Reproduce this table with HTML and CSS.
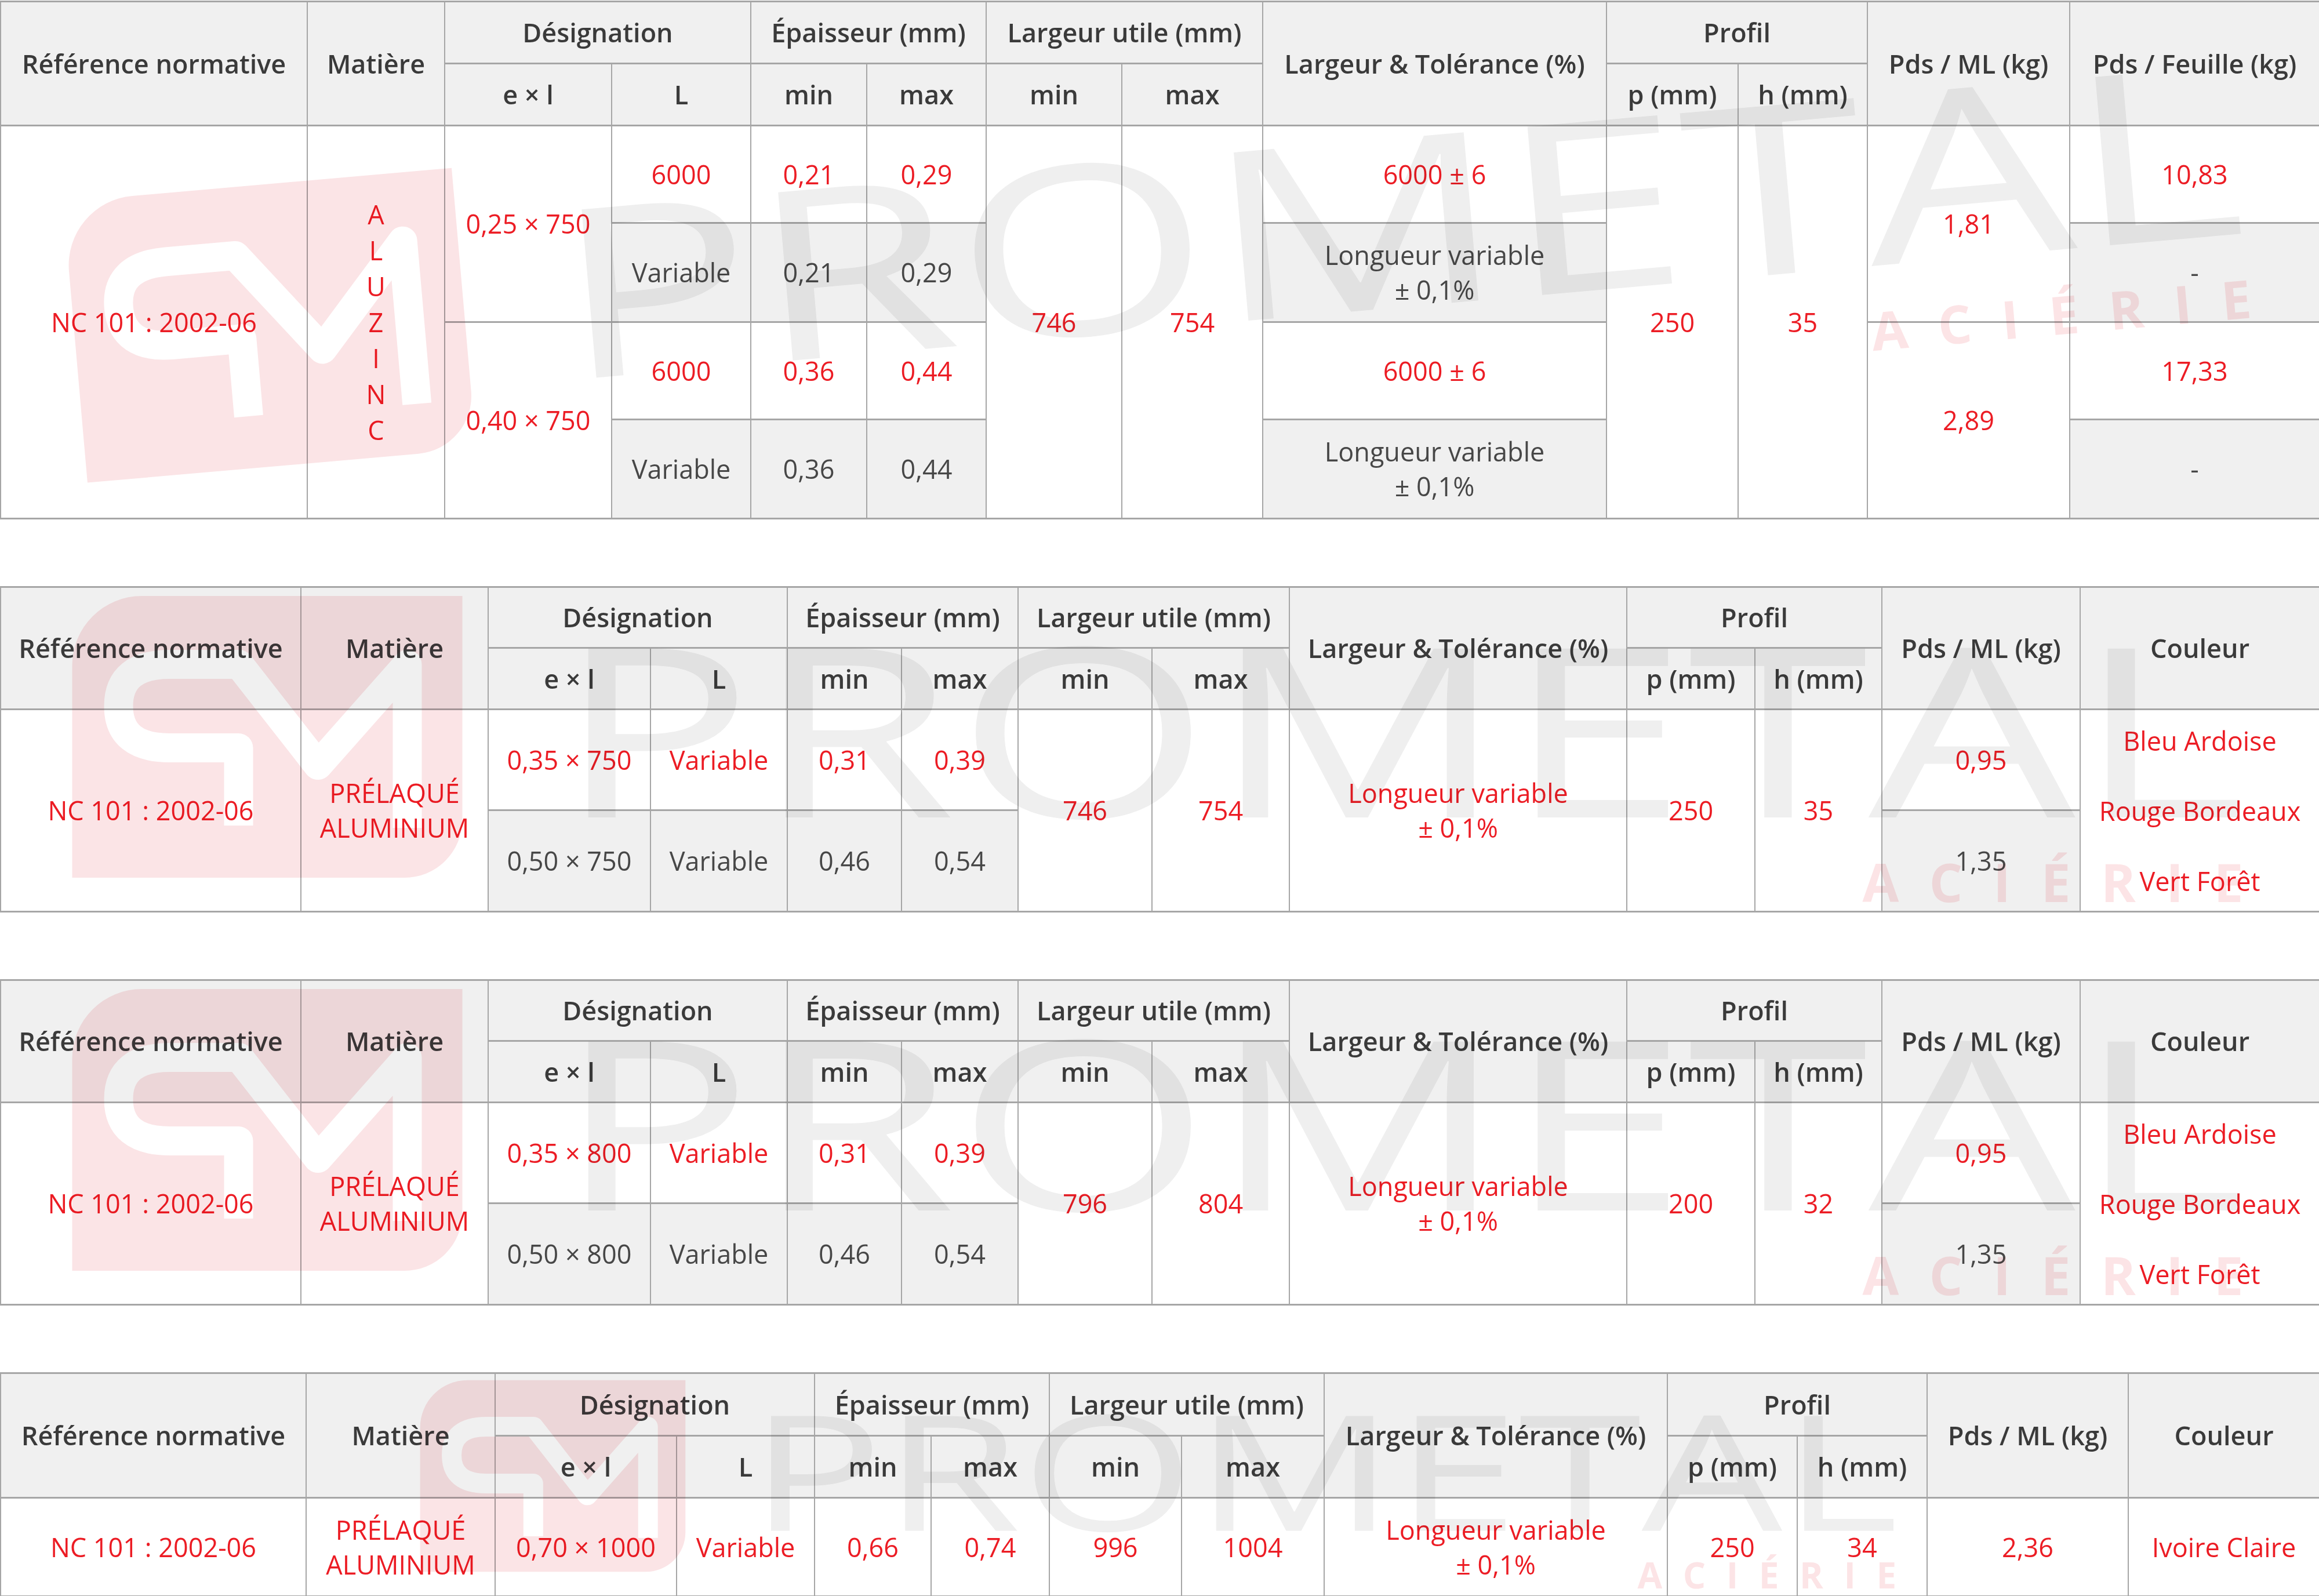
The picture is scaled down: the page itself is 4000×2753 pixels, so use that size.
FILE: index.html
```html
<!DOCTYPE html>
<html lang="fr">
<head>
<meta charset="utf-8">
<title>Tableaux</title>
<link rel="stylesheet" href="styles.css">
</head>
<body>
<div class="page">

<div class="block b1">
<table class="t t1">
<colgroup><col class="a1"><col class="a2"><col class="a3"><col class="a4"><col class="a5"><col class="a6"><col class="a7"><col class="a8"><col class="a9"><col class="a10"><col class="a11"><col class="a12"><col class="a13"></colgroup>
<thead>
<tr class="h1"><th rowspan="2">Référence normative</th><th rowspan="2">Matière</th><th colspan="2">Désignation</th><th colspan="2">Épaisseur (mm)</th><th colspan="2">Largeur utile (mm)</th><th rowspan="2">Largeur &amp; Tolérance (%)</th><th colspan="2">Profil</th><th rowspan="2">Pds / ML (kg)</th><th rowspan="2">Pds / Feuille (kg)</th></tr>
<tr class="h2"><th>e × l</th><th>L</th><th>min</th><th>max</th><th>min</th><th>max</th><th>p (mm)</th><th>h (mm)</th></tr>
</thead>
<tbody>
<tr class="r1a"><td rowspan="4">NC 101 : 2002-06</td><td rowspan="4" class="vert">A<br>L<br>U<br>Z<br>I<br>N<br>C</td><td rowspan="2">0,25 × 750</td><td>6000</td><td>0,21</td><td>0,29</td><td rowspan="4">746</td><td rowspan="4">754</td><td>6000 ± 6</td><td rowspan="4">250</td><td rowspan="4">35</td><td rowspan="2">1,81</td><td>10,83</td></tr>
<tr class="r1b"><td class="gr">Variable</td><td class="gr">0,21</td><td class="gr">0,29</td><td class="gr">Longueur variable<br>± 0,1%</td><td class="gr">-</td></tr>
<tr class="r1a"><td rowspan="2">0,40 × 750</td><td>6000</td><td>0,36</td><td>0,44</td><td>6000 ± 6</td><td rowspan="2">2,89</td><td>17,33</td></tr>
<tr class="r1b"><td class="gr">Variable</td><td class="gr">0,36</td><td class="gr">0,44</td><td class="gr">Longueur variable<br>± 0,1%</td><td class="gr">-</td></tr>
</tbody>
</table>
<svg class="wm" viewBox="0 0 3751 530" aria-hidden="true">
<path d="M120 0H673V386A100 100 0 0 1 573 486H0V120A120 120 0 0 1 120 0Z" fill="#fbe4e6"/>
<path d="M578 400V118L424 292L288 118H168Q80 118 80 190Q80 262 168 262H287V396" fill="none" stroke="#ffffff" stroke-width="50" stroke-linejoin="round"/>
<text x="835" y="382" textLength="2916" lengthAdjust="spacingAndGlyphs" font-family="Open Sans, sans-serif" font-weight="500" font-size="408" fill="#efefef">PROMETAL</text>
<text x="3088" y="528" textLength="657" lengthAdjust="spacing" font-family="Open Sans, sans-serif" font-weight="700" font-size="91" fill="#fce4e6">ACIÉRIE</text>
</svg>
</div>

<div class="block b2">
<table class="t t2">
<colgroup><col class="b1c"><col class="b2c"><col class="b3c"><col class="b4c"><col class="b5c"><col class="b6c"><col class="b7c"><col class="b8c"><col class="b9c"><col class="b10c"><col class="b11c"><col class="b12c"><col class="b13c"></colgroup>
<thead>
<tr class="h1"><th rowspan="2">Référence normative</th><th rowspan="2">Matière</th><th colspan="2">Désignation</th><th colspan="2">Épaisseur (mm)</th><th colspan="2">Largeur utile (mm)</th><th rowspan="2">Largeur &amp; Tolérance (%)</th><th colspan="2">Profil</th><th rowspan="2">Pds / ML (kg)</th><th rowspan="2">Couleur</th></tr>
<tr class="h2"><th>e × l</th><th>L</th><th>min</th><th>max</th><th>min</th><th>max</th><th>p (mm)</th><th>h (mm)</th></tr>
</thead>
<tbody>
<tr class="r2a"><td rowspan="2">NC 101 : 2002-06</td><td rowspan="2">PRÉLAQUÉ<br>ALUMINIUM</td><td>0,35 × 750</td><td>Variable</td><td>0,31</td><td>0,39</td><td rowspan="2">746</td><td rowspan="2">754</td><td rowspan="2">Longueur variable<br>± 0,1%</td><td rowspan="2">250</td><td rowspan="2">35</td><td>0,95</td><td rowspan="2" class="colors"><div>Bleu Ardoise<br>Rouge Bordeaux<br>Vert Forêt</div></td></tr>
<tr class="r2b"><td class="gr">0,50 × 750</td><td class="gr">Variable</td><td class="gr">0,46</td><td class="gr">0,54</td><td class="gr">1,35</td></tr>
</tbody>
</table>
<svg class="wm" viewBox="0 0 3751 530" aria-hidden="true">
<path d="M120 0H673V386A100 100 0 0 1 573 486H0V120A120 120 0 0 1 120 0Z" fill="#fbe4e6"/>
<path d="M578 400V118L424 292L288 118H168Q80 118 80 190Q80 262 168 262H287V396" fill="none" stroke="#ffffff" stroke-width="50" stroke-linejoin="round"/>
<text x="835" y="382" textLength="2916" lengthAdjust="spacingAndGlyphs" font-family="Open Sans, sans-serif" font-weight="500" font-size="408" fill="#efefef">PROMETAL</text>
<text x="3088" y="528" textLength="657" lengthAdjust="spacing" font-family="Open Sans, sans-serif" font-weight="700" font-size="91" fill="#fce4e6">ACIÉRIE</text>
</svg>
</div>

<div class="block b3">
<table class="t t2">
<colgroup><col class="b1c"><col class="b2c"><col class="b3c"><col class="b4c"><col class="b5c"><col class="b6c"><col class="b7c"><col class="b8c"><col class="b9c"><col class="b10c"><col class="b11c"><col class="b12c"><col class="b13c"></colgroup>
<thead>
<tr class="h1"><th rowspan="2">Référence normative</th><th rowspan="2">Matière</th><th colspan="2">Désignation</th><th colspan="2">Épaisseur (mm)</th><th colspan="2">Largeur utile (mm)</th><th rowspan="2">Largeur &amp; Tolérance (%)</th><th colspan="2">Profil</th><th rowspan="2">Pds / ML (kg)</th><th rowspan="2">Couleur</th></tr>
<tr class="h2"><th>e × l</th><th>L</th><th>min</th><th>max</th><th>min</th><th>max</th><th>p (mm)</th><th>h (mm)</th></tr>
</thead>
<tbody>
<tr class="r2a"><td rowspan="2">NC 101 : 2002-06</td><td rowspan="2">PRÉLAQUÉ<br>ALUMINIUM</td><td>0,35 × 800</td><td>Variable</td><td>0,31</td><td>0,39</td><td rowspan="2">796</td><td rowspan="2">804</td><td rowspan="2">Longueur variable<br>± 0,1%</td><td rowspan="2">200</td><td rowspan="2">32</td><td>0,95</td><td rowspan="2" class="colors"><div>Bleu Ardoise<br>Rouge Bordeaux<br>Vert Forêt</div></td></tr>
<tr class="r2b"><td class="gr">0,50 × 800</td><td class="gr">Variable</td><td class="gr">0,46</td><td class="gr">0,54</td><td class="gr">1,35</td></tr>
</tbody>
</table>
<svg class="wm" viewBox="0 0 3751 530" aria-hidden="true">
<path d="M120 0H673V386A100 100 0 0 1 573 486H0V120A120 120 0 0 1 120 0Z" fill="#fbe4e6"/>
<path d="M578 400V118L424 292L288 118H168Q80 118 80 190Q80 262 168 262H287V396" fill="none" stroke="#ffffff" stroke-width="50" stroke-linejoin="round"/>
<text x="835" y="382" textLength="2916" lengthAdjust="spacingAndGlyphs" font-family="Open Sans, sans-serif" font-weight="500" font-size="408" fill="#efefef">PROMETAL</text>
<text x="3088" y="528" textLength="657" lengthAdjust="spacing" font-family="Open Sans, sans-serif" font-weight="700" font-size="91" fill="#fce4e6">ACIÉRIE</text>
</svg>
</div>

<div class="block b4">
<table class="t t4">
<colgroup><col class="d1"><col class="d2"><col class="d3"><col class="d4"><col class="d5"><col class="d6"><col class="d7"><col class="d8"><col class="d9"><col class="d10"><col class="d11"><col class="d12"><col class="d13"></colgroup>
<thead>
<tr class="h1"><th rowspan="2">Référence normative</th><th rowspan="2">Matière</th><th colspan="2">Désignation</th><th colspan="2">Épaisseur (mm)</th><th colspan="2">Largeur utile (mm)</th><th rowspan="2">Largeur &amp; Tolérance (%)</th><th colspan="2">Profil</th><th rowspan="2">Pds / ML (kg)</th><th rowspan="2">Couleur</th></tr>
<tr class="h2"><th>e × l</th><th>L</th><th>min</th><th>max</th><th>min</th><th>max</th><th>p (mm)</th><th>h (mm)</th></tr>
</thead>
<tbody>
<tr class="r4"><td>NC 101 : 2002-06</td><td>PRÉLAQUÉ<br>ALUMINIUM</td><td>0,70 × 1000</td><td>Variable</td><td>0,66</td><td>0,74</td><td>996</td><td>1004</td><td>Longueur variable<br>± 0,1%</td><td>250</td><td>34</td><td>2,36</td><td>Ivoire Claire</td></tr>
</tbody>
</table>
<svg class="wm" viewBox="0 0 3751 530" aria-hidden="true">
<path d="M120 0H673V386A100 100 0 0 1 573 486H0V120A120 120 0 0 1 120 0Z" fill="#fbe4e6"/>
<path d="M578 400V118L424 292L288 118H168Q80 118 80 190Q80 262 168 262H287V396" fill="none" stroke="#ffffff" stroke-width="50" stroke-linejoin="round"/>
<text x="835" y="382" textLength="2916" lengthAdjust="spacingAndGlyphs" font-family="Open Sans, sans-serif" font-weight="500" font-size="408" fill="#efefef">PROMETAL</text>
<text x="3088" y="528" textLength="657" lengthAdjust="spacing" font-family="Open Sans, sans-serif" font-weight="700" font-size="91" fill="#fce4e6">ACIÉRIE</text>
</svg>
</div>

</div>
</body>
</html>
```

FILE: styles.css
```css
html, body {
  margin: 0;
  padding: 0;
  background: #ffffff;
}

body {
  font-family: "Open Sans", "Liberation Sans", sans-serif;
}

.page {
  display: flex;
  flex-direction: column;
  gap: 115px;
  padding-top: 1px;
  width: 4000px;
}

.block {
  position: relative;
}

.t {
  width: 4000px;
  border-collapse: collapse;
  table-layout: fixed;
}

.t th,
.t td {
  border-style: solid;
  border-color: #a6a6a6;
  border-width: 3px 2px;
  padding: 0;
  text-align: center;
  vertical-align: middle;
}

.t th {
  background: #f0f0f0;
  color: #3a3a3a;
  font-weight: 600;
  font-size: 45px;
  line-height: 60px;
}

.t td {
  background: #ffffff;
  color: #ec1c24;
  font-weight: 400;
  font-size: 45px;
  line-height: 60px;
}

.t td.gr {
  background: #f0f0f0;
  color: #474747;
}

.t td.vert {
  line-height: 62px;
}

.t td.colors div {
  line-height: 121px;
  margin: -14px 0;
}

/* table 1 columns */
.a1 { width: 529px; }
.a2 { width: 237px; }
.a3 { width: 288px; }
.a4 { width: 240px; }
.a5 { width: 200px; }
.a6 { width: 206px; }
.a7 { width: 234px; }
.a8 { width: 243px; }
.a9 { width: 593px; }
.a10 { width: 227px; }
.a11 { width: 223px; }
.a12 { width: 349px; }
.a13 { width: 431px; }

/* tables 2 and 3 columns */
.b1c { width: 518px; }
.b2c { width: 323px; }
.b3c { width: 280px; }
.b4c { width: 236px; }
.b5c { width: 197px; }
.b6c { width: 201px; }
.b7c { width: 231px; }
.b8c { width: 237px; }
.b9c { width: 582px; }
.b10c { width: 221px; }
.b11c { width: 219px; }
.b12c { width: 342px; }
.b13c { width: 413px; }

/* table 4 columns */
.d1 { width: 527px; }
.d2 { width: 326px; }
.d3 { width: 313px; }
.d4 { width: 238px; }
.d5 { width: 201px; }
.d6 { width: 204px; }
.d7 { width: 228px; }
.d8 { width: 246px; }
.d9 { width: 592px; }
.d10 { width: 224px; }
.d11 { width: 224px; }
.d12 { width: 347px; }
.d13 { width: 330px; }

/* row heights */
.t1 .h1 { height: 107px; }
.t1 .h2 { height: 107px; }
.t1 .r1a { height: 168px; }
.t1 .r1b { height: 171px; }

.t2 .h1 { height: 105px; }
.t2 .h2 { height: 106px; }
.t2 .r2a { height: 174px; }
.t2 .r2b { height: 175px; }

.t4 .h1 { height: 108px; }
.t4 .h2 { height: 107px; }
.t4 .r4 { height: 170px; }

/* watermark overlay */
.wm {
  position: absolute;
  left: 50%;
  top: 50%;
  width: 3751px;
  height: 530px;
  transform: translate(-50%, -50%);
  mix-blend-mode: multiply;
  pointer-events: none;
  overflow: visible;
}

.b1 .wm {
  transform: translate(-50%, -50%) rotate(-5deg);
}

.b4 .wm {
  transform: translate(-50%, -50%) scale(0.68);
}
```
